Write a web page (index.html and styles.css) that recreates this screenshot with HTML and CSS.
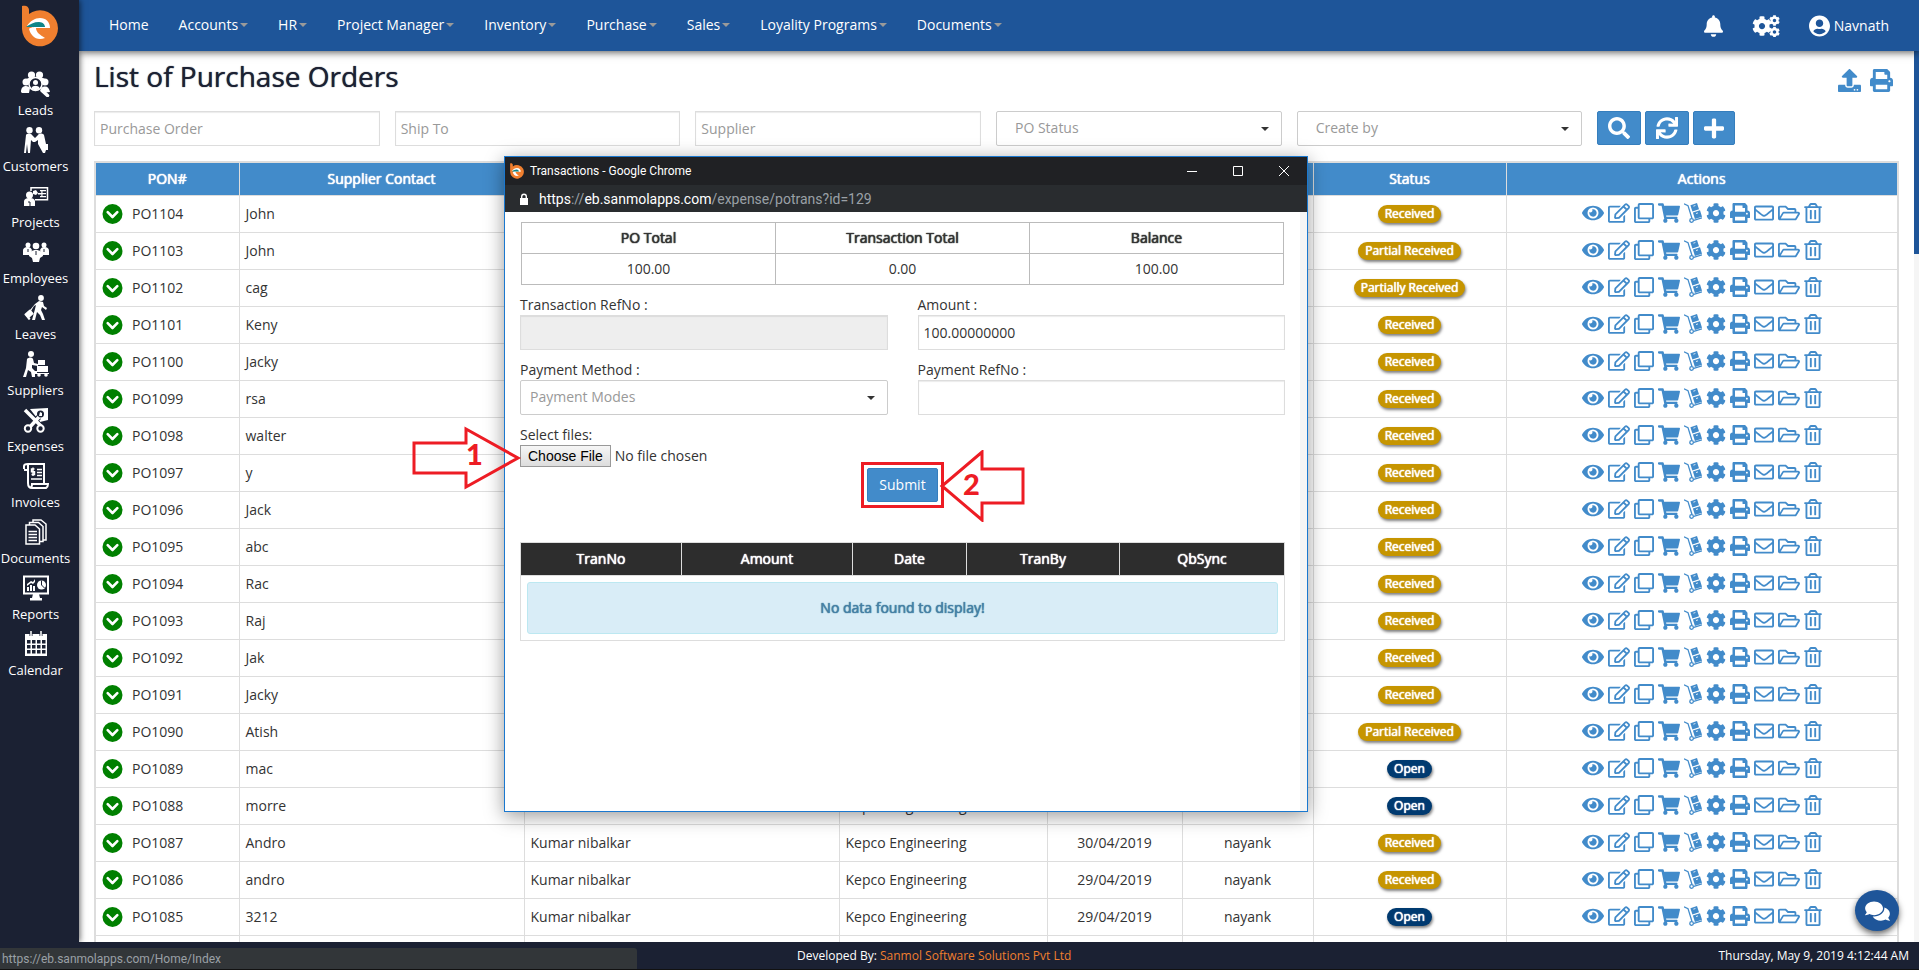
FILE: index.html
```html
<!DOCTYPE html>
<html lang="en">
<head>
<meta charset="utf-8">
<title>List of Purchase Orders</title>
<link rel="stylesheet" href="styles.css">
</head>
<body>
<svg class="sprite" aria-hidden="true">
  <symbol id="i-logo" viewBox="0 0 36 42"><path fill="#f07f2f" d="M0 1C3 0 7 1 7 5v4A18 18 0 1 1 0 24z"/><path fill="#fff" d="M5 21c3-5 8-8 13-8 6 0 10 4 10 10H14c0 4 4 7 9 10-9 3-14-2-16-9 0-1 4-2 6-2z"/><path fill="#0d8588" d="M4 22c4-3 8-5 13-5 4 0 6 3 6 5z"/></symbol>
  <symbol id="i-eye" viewBox="0 0 576 512"><path d="M572.52 241.4C518.29 135.59 410.93 64 288 64S57.68 135.64 3.48 241.41a32.35 32.35 0 0 0 0 29.19C57.71 376.41 165.07 448 288 448s230.32-71.64 284.52-177.41a32.35 32.35 0 0 0 0-29.19zM288 400a144 144 0 1 1 144-144 143.93 143.93 0 0 1-144 144zm0-240a95.31 95.31 0 0 0-25.31 3.79 47.85 47.85 0 0 1-66.9 66.9A95.78 95.78 0 1 0 288 160z"/></symbol>
  <symbol id="i-edit" viewBox="0 0 576 512"><path d="M402.3 344.9l32-32c5-5 13.7-1.5 13.7 5.7V464c0 26.5-21.5 48-48 48H48c-26.5 0-48-21.5-48-48V112c0-26.5 21.5-48 48-48h273.5c7.1 0 10.7 8.6 5.7 13.7l-32 32c-1.5 1.5-3.5 2.3-5.7 2.3H48v352h352V350.5c0-2.1.8-4.1 2.3-5.6zm156.6-201.8L296.3 405.7l-90.4 10c-26.2 2.9-48.5-19.2-45.6-45.6l10-90.4L432.9 17.1c22.9-22.9 59.9-22.9 82.7 0l43.2 43.2c22.9 22.9 22.9 60 .1 82.8zM460.1 174L402 115.9 216.2 301.8l-7.3 65.3 65.3-7.3L460.1 174zm64.8-79.7l-43.2-43.2c-4.1-4.1-10.8-4.1-14.8 0L436 82l58.1 58.1 30.9-30.9c4-4.2 4-10.8-.1-14.9z"/></symbol>
  <symbol id="i-clone" viewBox="0 0 512 512"><path d="M464 0H144c-26.51 0-48 21.49-48 48v48H48c-26.51 0-48 21.49-48 48v320c0 26.51 21.49 48 48 48h320c26.51 0 48-21.49 48-48v-48h48c26.51 0 48-21.49 48-48V48c0-26.51-21.49-48-48-48zM362 464H54a6 6 0 0 1-6-6V150a6 6 0 0 1 6-6h42v224c0 26.51 21.49 48 48 48h224v42a6 6 0 0 1-6 6zm96-96H150a6 6 0 0 1-6-6V54a6 6 0 0 1 6-6h308a6 6 0 0 1 6 6v308a6 6 0 0 1-6 6z"/></symbol>
  <symbol id="i-cart" viewBox="0 0 576 512"><path d="M528.12 301.319l47.273-208C578.806 78.301 567.391 64 551.99 64H159.208l-9.166-44.81C147.758 8.021 137.93 0 126.529 0H24C10.745 0 0 10.745 0 24v16c0 13.255 10.745 24 24 24h69.883l70.248 343.435C147.325 417.1 136 435.222 136 456c0 30.928 25.072 56 56 56s56-25.072 56-56c0-15.674-6.447-29.835-16.824-40h209.647C430.447 426.165 424 440.326 424 456c0 30.928 25.072 56 56 56s56-25.072 56-56c0-22.172-12.888-41.332-31.579-50.405l5.517-24.276c3.413-15.018-8.002-29.319-23.403-29.319H218.117l-6.545-32h293.145c11.206 0 20.92-7.754 23.403-18.681z"/></symbol>
  <symbol id="i-dolly" viewBox="0 0 18 20"><path fill="none" stroke="currentColor" stroke-width="1.300" d="M0 .8l4 1.800 4 12.900M9.800 17.300L18 14.800"/><circle cx="7.600" cy="17.500" r="1.800" fill="none" stroke="currentColor" stroke-width="1.300"/><path d="M6.400 2.200L13 0l2 6.300-6.600 2.100zM8.900 9.600l7.100-2.300 2 6.400-7.100 2.200z"/><path stroke="#fff" stroke-width=".8" d="M9.400 3.200l2-.7M12 10.600l2-.7"/></symbol>
  <symbol id="i-cog" viewBox="0 0 512 512"><path d="M487.4 315.7l-42.6-24.6c4.3-23.2 4.3-47 0-70.2l42.6-24.6c4.9-2.8 7.1-8.6 5.5-14-11.1-35.6-30-67.8-54.7-94.6-3.8-4.1-10-5.1-14.8-2.3L380.8 110c-17.9-15.4-38.5-27.3-60.8-35.1V25.8c0-5.6-3.9-10.5-9.4-11.7-36.7-8.2-74.3-7.8-109.2 0-5.5 1.200-9.400 6.100-9.400 11.700V75c-22.200 7.900-42.800 19.800-60.800 35.100L88.700 85.500c-4.900-2.800-11-1.900-14.800 2.300-24.700 26.700-43.600 58.900-54.700 94.600-1.700 5.400.6 11.200 5.500 14L67.300 221c-4.300 23.200-4.300 47 0 70.200l-42.600 24.600c-4.900 2.800-7.100 8.600-5.500 14 11.100 35.600 30 67.800 54.700 94.600 3.800 4.100 10 5.100 14.800 2.300l42.600-24.600c17.900 15.400 38.500 27.300 60.800 35.100v49.200c0 5.600 3.900 10.500 9.400 11.700 36.700 8.200 74.300 7.800 109.200 0 5.500-1.200 9.400-6.100 9.400-11.700v-49.200c22.200-7.900 42.800-19.800 60.800-35.100l42.600 24.600c4.900 2.800 11 1.900 14.800-2.300 24.700-26.700 43.600-58.900 54.700-94.600 1.500-5.500-.7-11.300-5.600-14.100zM256 336c-44.100 0-80-35.900-80-80s35.900-80 80-80 80 35.900 80 80-35.900 80-80 80z"/></symbol>
  <symbol id="i-cogs" viewBox="0 0 28 22"><use href="#i-cog" x="0" y="1" width="20" height="20"/><use href="#i-cog" x="17" y="0" width="11" height="11"/><use href="#i-cog" x="17" y="11.500" width="11" height="11"/></symbol>
  <symbol id="i-print" viewBox="0 0 512 512"><path d="M448 192V77.250c0-8.490-3.370-16.620-9.370-22.630L393.370 9.370c-6-6-14.140-9.370-22.630-9.370H96C78.330 0 64 14.330 64 32v160c-35.350 0-64 28.650-64 64v112c0 8.840 7.160 16 16 16h48v96c0 17.670 14.330 32 32 32h320c17.670 0 32-14.330 32-32v-96h48c8.840 0 16-7.160 16-16V256c0-35.350-28.650-64-64-64zm-64 256H128v-96h256v96zm0-224H128V64h192v48c0 8.840 7.160 16 16 16h48v96zm48 72c-13.250 0-24-10.750-24-24 0-13.260 10.750-24 24-24s24 10.740 24 24c0 13.250-10.750 24-24 24z"/></symbol>
  <symbol id="i-mail" viewBox="0 0 512 512"><path d="M464 64H48C21.490 64 0 85.490 0 112v288c0 26.510 21.490 48 48 48h416c26.510 0 48-21.490 48-48V112c0-26.510-21.490-48-48-48zm0 48v40.805c-22.422 18.259-58.168 46.651-134.587 106.490-16.841 13.247-50.201 45.072-73.413 44.701-23.208.375-56.579-31.459-73.413-44.701C106.180 199.465 70.425 171.067 48 152.805V112h416zM48 400V214.398c22.914 18.251 55.409 43.862 104.938 82.646 21.857 17.205 60.134 55.186 103.062 54.955 42.717.231 80.509-37.199 103.053-54.947 49.528-38.783 82.032-64.401 104.947-82.653V400H48z"/></symbol>
  <symbol id="i-folder" viewBox="0 0 576 512"><path d="M527.900 224H480v-48c0-26.500-21.500-48-48-48H272l-64-64H48C21.500 64 0 85.500 0 112v288c0 26.500 21.500 48 48 48h400c16.500 0 31.900-8.500 40.700-22.600l79.900-128c20-31.900-3-73.400-40.700-73.400zM48 118c0-3.300 2.700-6 6-6h134.100l64 64H426c3.300 0 6 2.700 6 6v42H152c-16.800 0-32.400 8.800-41.100 23.200L48 351.400zm400 282H72l77.200-128H528z"/></symbol>
  <symbol id="i-trash" viewBox="0 0 448 512"><path d="M268 416h24a12 12 0 0 0 12-12V188a12 12 0 0 0-12-12h-24a12 12 0 0 0-12 12v216a12 12 0 0 0 12 12zM432 80h-82.410l-34-56.700A48 48 0 0 0 274.410 0H173.590a48 48 0 0 0-41.160 23.300L98.410 80H16A16 16 0 0 0 0 96v16a16 16 0 0 0 16 16h16v336a48 48 0 0 0 48 48h288a48 48 0 0 0 48-48V128h16a16 16 0 0 0 16-16V96a16 16 0 0 0-16-16zM171.840 50.910A6 6 0 0 1 177 48h94a6 6 0 0 1 5.150 2.910L293.610 80H154.390zM368 464H80V128h288zm-212-48h24a12 12 0 0 0 12-12V188a12 12 0 0 0-12-12h-24a12 12 0 0 0-12 12v216a12 12 0 0 0 12 12z"/></symbol>
  <symbol id="i-bell" viewBox="0 0 448 512"><path d="M224 512c35.320 0 63.970-28.650 63.970-64H160.030c0 35.350 28.650 64 63.970 64zm215.390-149.710c-19.320-20.760-55.470-51.990-55.470-154.290 0-77.700-54.480-139.900-127.940-155.160V32c0-17.670-14.320-32-31.980-32s-31.980 14.330-31.980 32v20.840C118.560 68.100 64.080 130.300 64.080 208c0 102.300-36.150 133.530-55.470 154.290-6 6.450-8.660 14.160-8.610 21.710.11 16.400 12.980 32 32.100 32h383.800c19.120 0 32-15.600 32.100-32 .05-7.550-2.610-15.270-8.610-21.710z"/></symbol>
  <symbol id="i-user" viewBox="0 0 496 512"><path d="M248 8C111 8 0 119 0 256s111 248 248 248 248-111 248-248S385 8 248 8zm0 96c48.600 0 88 39.400 88 88s-39.400 88-88 88-88-39.400-88-88 39.400-88 88-88zm0 344c-58.700 0-111.300-26.600-146.500-68.200 18.800-35.400 55.600-59.800 98.500-59.800 2.400 0 4.800.4 7.100 1.100 13 4.200 26.600 6.900 40.900 6.900 14.300 0 28-2.700 40.900-6.900 2.300-.7 4.700-1.100 7.100-1.100 42.900 0 79.700 24.400 98.500 59.800C359.300 421.400 306.700 448 248 448z"/></symbol>
  <symbol id="i-upload" viewBox="0 0 512 512"><path d="M296 384h-80c-13.300 0-24-10.700-24-24V192h-87.700c-17.800 0-26.700-21.500-14.100-34.100L242.300 5.700c7.500-7.500 19.800-7.500 27.300 0l152.200 152.200c12.600 12.600 3.700 34.100-14.100 34.100H320v168c0 13.300-10.700 24-24 24zm216-8v112c0 13.300-10.700 24-24 24H24c-13.300 0-24-10.700-24-24V376c0-13.300 10.700-24 24-24h136v8c0 30.900 25.100 56 56 56h80c30.900 0 56-25.100 56-56v-8h136c13.300 0 24 10.700 24 24zm-124 88c0-11-9-20-20-20s-20 9-20 20 9 20 20 20 20-9 20-20zm64 0c0-11-9-20-20-20s-20 9-20 20 9 20 20 20 20-9 20-20z"/></symbol>
  <symbol id="i-search" viewBox="0 0 512 512"><path d="M505 442.700L405.300 343c-4.500-4.500-10.600-7-17-7H372c27.600-35.300 44-79.700 44-128C416 93.100 322.900 0 208 0S0 93.100 0 208s93.100 208 208 208c48.300 0 92.700-16.400 128-44v16.300c0 6.400 2.500 12.500 7 17l99.700 99.700c9.400 9.400 24.600 9.400 33.900 0l28.300-28.300c9.400-9.400 9.400-24.600.1-34zM208 336c-70.700 0-128-57.200-128-128 0-70.700 57.200-128 128-128 70.700 0 128 57.200 128 128 0 70.700-57.200 128-128 128z"/></symbol>
  <symbol id="i-sync" viewBox="0 0 512 512"><path d="M440.650 12.570l4 82.770A247.160 247.160 0 0 0 255.830 8C134.730 8 33.910 94.920 12.290 209.820A12 12 0 0 0 24.090 224h49.050a12 12 0 0 0 11.670-9.260 175.910 175.910 0 0 1 317-56.940l-101.460-4.860a12 12 0 0 0-12.570 12v47.410a12 12 0 0 0 12 12H500a12 12 0 0 0 12-12V12a12 12 0 0 0-12-12h-47.370a12 12 0 0 0-11.980 12.570zM255.830 432a175.610 175.610 0 0 1-146-77.800l101.800 4.870a12 12 0 0 0 12.570-12v-47.400a12 12 0 0 0-12-12H12a12 12 0 0 0-12 12V500a12 12 0 0 0 12 12h47.350a12 12 0 0 0 12-12.600l-4.150-82.570A247.170 247.170 0 0 0 255.830 504c121.110 0 221.930-86.920 243.550-201.820a12 12 0 0 0-11.800-14.180h-49.050a12 12 0 0 0-11.670 9.260A175.860 175.860 0 0 1 255.830 432z"/></symbol>
  <symbol id="i-plus" viewBox="0 0 448 512"><path d="M416 208H272V64c0-17.670-14.330-32-32-32h-32c-17.670 0-32 14.330-32 32v144H32c-17.670 0-32 14.330-32 32v32c0 17.670 14.330 32 32 32h144v144c0 17.670 14.330 32 32 32h32c17.670 0 32-14.330 32-32V304h144c17.670 0 32-14.330 32-32v-32c0-17.670-14.330-32-32-32z"/></symbol>
  <symbol id="i-down" viewBox="0 0 20 20"><circle cx="10" cy="10" r="10"/><path fill="none" stroke="#fff" stroke-width="2.600" stroke-linecap="round" stroke-linejoin="round" d="M5.200 8.200L10 13l4.800-4.800"/></symbol>
  <symbol id="i-chat" viewBox="0 0 576 512"><path d="M416 192c0-88.400-93.100-160-208-160S0 103.600 0 192c0 34.300 14.100 65.900 38 92-13.400 30.200-35.500 54.200-35.800 54.500-2.200 2.300-2.800 5.700-1.500 8.700S4.800 352 8 352c36.600 0 66.900-12.300 88.700-25 32.200 15.700 70.300 25 111.300 25 114.900 0 208-71.600 208-160zm122 220c23.900-26 38-57.700 38-92 0-66.900-53.500-124.200-129.300-148.100.9 6.600 1.300 13.300 1.300 20.100 0 105.900-107.700 192-240 192-10.800 0-21.300-.8-31.700-1.900C207.800 439.600 281.800 480 368 480c41 0 79.100-9.200 111.300-25 21.800 12.700 52.100 25 88.700 25 3.200 0 6.100-1.900 7.300-4.800 1.300-2.900.7-6.300-1.500-8.700-.3-.3-22.400-24.200-35.800-54.500z"/></symbol>
  <symbol id="i-lock" viewBox="0 0 10 12"><path d="M1 5h8v7H1zM2 5V3.500a3 3 0 0 1 6 0V5H6.600V3.500a1.600 1.600 0 0 0-3.200 0V5z"/></symbol>

  <symbol id="s-leads" viewBox="0 0 30 26"><circle cx="10.500" cy="4" r="3.600"/><circle cx="18.500" cy="4" r="3.600"/><circle cx="5" cy="11" r="3.500"/><circle cx="24" cy="11" r="3.500"/><path d="M0 21c0-4 2-6 5-6 2 0 3 1 4 2l-1 5H1zM20 17c5-3 8-1 9 4l-8 1zM6 8c1-2 16-2 18 0l-3 4H9z"/><circle cx="14.500" cy="13" r="6.500" fill="#1b2133" stroke="#fff" stroke-width="1.500"/><circle cx="14.500" cy="11.500" r="2.500"/><path d="M10.500 17c1-3 7-3 8 0-2 3-6 3-8 0z"/><path stroke="#fff" stroke-width="3.500" stroke-linecap="round" d="M21 19.500l5.500 5"/></symbol>
  <symbol id="s-customers" viewBox="0 0 26 26"><circle cx="6.500" cy="3.300" r="3.200"/><circle cx="16" cy="3.300" r="3.200"/><path d="M3 8c1-2 5-2 6 0l3 3 3-3c1-2 5-2 6 0l2 9h2v6h-2l-1 3h-2l-5-9v-4l-3 2h-2l-2-2-1 13H5l-1-9-1 9H1z"/></symbol>
  <symbol id="s-projects" viewBox="0 0 26 26"><path fill="none" stroke="#fff" stroke-width="1.500" d="M8 8V4.700h16.500v12H12"/><circle cx="6.500" cy="12" r="3.500"/><path d="M1 23v-4c0-3 2-4 5.500-4s5.500 1 5.500 4v4z"/><path d="M10 8l3-1 2 3-2 2-3-1zM15 10h3v1.500h-3zM17 7h6v1.300h-6zM17 10h6v1.300h-6zM17 13h6v1.300h-6z"/><path d="M18.300 7h1.200v7h-1.200z"/><path stroke="#1b2133" d="M5 19h2v4"/></symbol>
  <symbol id="s-employees" viewBox="0 0 26 26"><circle cx="5" cy="6" r="2.500"/><circle cx="21" cy="6" r="2.500"/><circle cx="13" cy="7" r="3.300"/><path d="M0 16v-4c0-3 2-4 5-4 2 0 3 1 4 3l-2 5zM26 16v-4c0-3-2-4-5-4-2 0-3 1-4 3l2 5z"/><path d="M6 17c0-4 3-6 7-6s7 2 7 6l-3 2-1 4h-6l-1-4z"/><path stroke="#1b2133" stroke-width="1" d="M13 12v4M5 10v3M21 10v3"/></symbol>
  <symbol id="s-leaves" viewBox="0 0 26 26"><circle cx="18" cy="3" r="2.900"/><path d="M12 9l4-3 4 1 1 4 3 2-1 2-4-3-1 3 2 4 2 6h-3l-2-5-3-3-2 8h-3l3-11 1-4-2 1-3 5-1-1z"/><rect x="2" y="16" width="8" height="6" rx="1" transform="rotate(-40 6 19)"/><circle cx="6" cy="23.500" r="1.300"/></symbol>
  <symbol id="s-suppliers" viewBox="0 0 26 26"><circle cx="8" cy="3" r="3"/><path d="M4 8c2-2 5-2 6 0l1 4 4 1v2l-6-1 0 3 3 3v6H9l-1-5-3-2-2 7H0l3-9z"/><path d="M15 9h7v5h-7zM14 15h11v6H14zM12 20h2v2h12v1H12z"/><circle cx="16" cy="24" r="1.800"/><circle cx="23" cy="24" r="1.800"/></symbol>
  <symbol id="s-expenses" viewBox="0 0 26 26"><path d="M7 2l18-1v12l-8 2z"/><circle cx="17.500" cy="7" r="3.500" fill="#1b2133"/><path d="M17 5l2 1v3h-3z"/><path stroke="#1b2133" stroke-width="5.500" d="M3 4l17 18M16 10L5 21"/><path stroke="#fff" stroke-width="3.500" d="M2 3l17 17M16 10L6 21"/><circle cx="5" cy="21.500" r="3.200" fill="#1b2133" stroke="#fff" stroke-width="2"/><circle cx="17.500" cy="21.500" r="3.200" fill="#1b2133" stroke="#fff" stroke-width="2"/></symbol>
  <symbol id="s-invoices" viewBox="0 0 26 26"><g fill="none" stroke="#fff" stroke-width="2"><path d="M1 6V3c0-2 2-2 4-2h16v19M5 2v18c0 3 1 5 4 5h14c2-1 2-3 2-4H9c0 3-1 4-2 4M1 7h4"/></g><path fill="none" stroke="#fff" stroke-width="1.400" d="M11.500 6H8.500v2.700h3v2.800h-3M10 4.500V13M14 6.500h5M14 9.500h5M14 12.500h5M8 16h11"/></symbol>
  <symbol id="s-documents" viewBox="0 0 26 26"><g fill="#1b2133" stroke="#fff" stroke-width="1.500"><path d="M10 1h8l5 4v16H10z"/><path d="M6.500 3.500h9l4.500 4v15H6.500z"/><path d="M3 6h9l4.500 4v15H3z"/></g><path stroke="#fff" stroke-width="1.400" d="M5.500 12.500h8.500M5.500 15.500h8.500M5.500 18.500h8.500M5.500 21.500h8.500"/></symbol>
  <symbol id="s-reports" viewBox="0 0 26 26"><path fill="none" stroke="#fff" stroke-width="2" d="M1 1.500h24v17H1z"/><path d="M10 19h6l1 4h2v2.500H7V23h2zM4 12h2v4H4zM7 10h2v6H7zM10 11h2v5h-2zM4 9l4-3 2 1 2-3 0 3-2 2-2-1-4 3z"/><circle cx="18.500" cy="10" r="4.500"/><path stroke="#1b2133" d="M18.500 5.500V10l3 3"/></symbol>
  <symbol id="s-calendar" viewBox="0 0 26 26"><path d="M2 3h22v22H2z"/><path stroke="#1b2133" stroke-width="3" d="M8 0v5M18 0v5"/><path stroke="#fff" stroke-width="1.500" d="M8 0v5M18 0v5"/><path fill="#1b2133" d="M4 9h3.500v3.500H4zM9 9h3.500v3.500H9zM14 9h3.500v3.500H14zM19 9h3.500v3.500H19zM4 14h3.500v3.500H4zM9 14h3.500v3.500H9zM14 14h3.500v3.500H14zM19 14h3.500v3.500H19zM4 19h3.500v3.500H4zM9 19h3.500v3.500H9zM14 19h3.500v3.500H14zM19 19h3.500v3.500H19z"/></symbol>
</svg>

<div class="app">
  <aside class="sidebar">
    <a class="logo" href="#" aria-label="Dashboard"><svg><use href="#i-logo"/></svg></a>
    <nav class="side-nav" aria-label="Modules">
      <a href="#"><svg><use href="#s-leads"/></svg>Leads</a>
      <a href="#"><svg><use href="#s-customers"/></svg>Customers</a>
      <a href="#"><svg><use href="#s-projects"/></svg>Projects</a>
      <a href="#"><svg><use href="#s-employees"/></svg>Employees</a>
      <a href="#"><svg><use href="#s-leaves"/></svg>Leaves</a>
      <a href="#"><svg><use href="#s-suppliers"/></svg>Suppliers</a>
      <a href="#"><svg><use href="#s-expenses"/></svg>Expenses</a>
      <a href="#"><svg><use href="#s-invoices"/></svg>Invoices</a>
      <a href="#"><svg><use href="#s-documents"/></svg>Documents</a>
      <a href="#"><svg><use href="#s-reports"/></svg>Reports</a>
      <a href="#"><svg><use href="#s-calendar"/></svg>Calendar</a>
    </nav>
  </aside>

  <header class="topbar">
    <nav class="menu" aria-label="Main">
      <a href="#">Home</a>
      <a class="drop" href="#">Accounts</a>
      <a class="drop" href="#">HR</a>
      <a class="drop" href="#">Project Manager</a>
      <a class="drop" href="#">Inventory</a>
      <a class="drop" href="#">Purchase</a>
      <a class="drop" href="#">Sales</a>
      <a class="drop" href="#">Loyality Programs</a>
      <a class="drop" href="#">Documents</a>
    </nav>
    <div class="tools">
      <a href="#" aria-label="Notifications"><svg class="bell"><use href="#i-bell"/></svg></a>
      <a href="#" aria-label="Settings"><svg class="cogs"><use href="#i-cogs"/></svg></a>
      <a class="user" href="#"><svg><use href="#i-user"/></svg>Navnath</a>
    </div>
  </header>

  <main class="content">
    <div class="page-head">
      <h1>List of Purchase Orders</h1>
      <div class="page-tools">
        <a href="#" aria-label="Export"><svg><use href="#i-upload"/></svg></a>
        <a href="#" aria-label="Print"><svg><use href="#i-print"/></svg></a>
      </div>
    </div>
    <form class="filters">
      <input class="field" type="text" placeholder="Purchase Order" aria-label="Purchase Order">
      <input class="field" type="text" placeholder="Ship To" aria-label="Ship To">
      <input class="field" type="text" placeholder="Supplier" aria-label="Supplier">
      <div class="select"><select class="field" aria-label="PO Status"><option>PO Status</option></select></div>
      <div class="select"><select class="field" aria-label="Create by"><option>Create by</option></select></div>
      <div class="filter-buttons">
        <button class="btn" type="button" aria-label="Search"><svg><use href="#i-search"/></svg></button>
        <button class="btn" type="button" aria-label="Refresh"><svg><use href="#i-sync"/></svg></button>
        <button class="btn" type="button" aria-label="Add"><svg class="plus"><use href="#i-plus"/></svg></button>
      </div>
    </form>
    <table class="orders">
      <colgroup><col class="c-pon"><col class="c-contact"><col class="c-ship"><col class="c-supplier"><col class="c-date"><col class="c-by"><col class="c-status"><col class="c-actions"></colgroup>
      <thead>
        <tr><th>PON#</th><th>Supplier Contact</th><th></th><th></th><th></th><th></th><th>Status</th><th>Actions</th></tr>
      </thead>
      <tbody id="orders"></tbody>
    </table>
    <div class="page-scroll"><div class="page-thumb"></div></div>
    <button class="chat" type="button" aria-label="Chat"><svg><use href="#i-chat"/></svg></button>
  </main>

  <footer class="footer">
    <p class="credit">Developed By: <a href="#">Sanmol Software Solutions Pvt Ltd</a></p>
    <time>Thursday, May 9, 2019 4:12:44 AM</time>
  </footer>
</div>
<div class="link-status">https://eb.sanmolapps.com/Home/Index</div>

<section class="window" aria-label="Transactions">
  <div class="titlebar">
    <svg class="favicon"><use href="#i-logo"/></svg>
    <span class="caption">Transactions - Google Chrome</span>
    <button type="button" aria-label="Minimize"><svg viewBox="0 0 10 10"><path d="M0 5.500h10"/></svg></button>
    <button type="button" aria-label="Maximize"><svg viewBox="0 0 10 10"><path d="M.5.500h9v9h-9z"/></svg></button>
    <button type="button" aria-label="Close"><svg viewBox="0 0 10 10"><path d="M0 0l10 10M10 0L0 10"/></svg></button>
  </div>
  <div class="address"><svg><use href="#i-lock"/></svg><span>https<i>://</i>eb.sanmolapps.com<i>/expense/potrans?id=129</i></span></div>
  <div class="window-body">
    <table class="totals">
      <thead><tr><th>PO Total</th><th>Transaction Total</th><th>Balance</th></tr></thead>
      <tbody><tr><td>100.00</td><td>0.00</td><td>100.00</td></tr></tbody>
    </table>
    <form class="payment">
      <div class="group"><label for="refno">Transaction RefNo :</label><input class="field" id="refno" type="text" disabled></div>
      <div class="group"><label for="amount">Amount :</label><input class="field" id="amount" type="text" value="100.00000000"></div>
      <div class="group"><label for="method">Payment Method :</label><div class="select"><select class="field" id="method"><option>Payment Modes</option></select></div></div>
      <div class="group"><label for="payref">Payment RefNo :</label><input class="field" id="payref" type="text"></div>
      <div class="group files"><label for="files">Select files:</label><input id="files" type="file"></div>
      <div class="submit-row"><div class="highlight"><button class="btn submit" type="button">Submit</button></div></div>
    </form>
    <table class="trans">
      <colgroup><col class="t-no"><col class="t-amount"><col class="t-date"><col class="t-by"><col class="t-sync"></colgroup>
      <thead><tr><th>TranNo</th><th>Amount</th><th>Date</th><th>TranBy</th><th>QbSync</th></tr></thead>
      <tbody><tr><td colspan="5"><div class="alert">No data found to display!</div></td></tr></tbody>
    </table>
  </div>
  <div class="mark mark-one"><svg viewBox="0 0 110 64"><path d="M2 17h52V3l52 29-52 29V47H2z"/></svg><b>1</b></div>
  <div class="mark mark-two"><svg viewBox="0 0 86 72"><path d="M84 19H43V2L3 36l40 34V53h41z"/></svg><b>2</b></div>
</section>
<script src="app.js"></script>
</body>
</html>
```
FILE: styles.css
```css
* { box-sizing: border-box; }
body {
  margin: 0;
  font: 14px/20px "Open Sans", "Noto Sans", sans-serif;
  color: #333;
  background: #fff;
}
a { color: inherit; text-decoration: none; }
svg { display: block; fill: currentColor; }
button, input, select { font: inherit; color: inherit; }
button { cursor: pointer; }
.sprite { position: absolute; width: 0; height: 0; }

.app {
  display: grid;
  grid-template-columns: 79px minmax(0, 1fr);
  grid-template-rows: 51px minmax(0, 1fr) 28px;
  height: 100vh;
}

/* Sidebar */
.sidebar {
  grid-row: 1 / 3;
  z-index: 4;
  background: #1b2133;
  color: #fff;
  box-shadow: 1px 0 6px rgba(0, 0, 0, .6);
}
.logo { display: flex; justify-content: center; padding-top: 5px; height: 65px; }
.logo svg { width: 36px; height: 42px; }
.side-nav { display: flex; flex-direction: column; padding-right: 8px; }
.side-nav a {
  display: flex;
  flex-direction: column;
  align-items: center;
  gap: 3px;
  height: 56px;
  padding-top: 6px;
  font-size: 13px;
}
.side-nav svg { width: 30px; height: 26px; }

/* Top bar */
.topbar {
  display: flex;
  justify-content: space-between;
  align-items: center;
  padding: 0 30px 0 15px;
  background: #1e5599;
  color: #fff;
  z-index: 3;
  box-shadow: 0 1px 8px rgba(0, 0, 0, .7);
}
.menu { display: flex; padding-bottom: 2px; }
.menu a { display: flex; align-items: center; gap: 2px; padding: 0 15px; }
.drop::after {
  content: "";
  border: 4px solid transparent;
  border-top-color: #9a9a9a;
  border-bottom: 0;
}
.tools { display: flex; align-items: center; }
.bell { width: 19px; height: 22px; margin-right: 29px; }
.cogs { width: 28px; height: 22px; margin-right: 29px; }
.user { display: flex; align-items: center; gap: 4px; }
.user svg { width: 21px; height: 22px; }

/* Page */
.content { position: relative; padding: 0 21px 0 15px; overflow: hidden; }
.page-head {
  display: flex;
  justify-content: space-between;
  align-items: center;
  height: 60px;
  padding: 0 5px 10px 0;
}
h1 { margin: 0; font-size: 28px; line-height: 36px; font-weight: 400; color: #1b2133; text-shadow: 0 0 1px currentColor; }
.page-tools { display: flex; gap: 9px; padding-top: 8px; color: #428bca; }
.page-tools svg { width: 23px; height: 23px; }
.filters {
  display: grid;
  grid-template-columns: repeat(6, minmax(0, 1fr));
  gap: 15px;
  padding-right: 15px;
}
.field {
  display: block;
  width: 100%;
  height: 35px;
  padding: 0 5px;
  border: 1px solid #ddd;
  border-radius: 0;
  background: #fff;
  box-shadow: inset 0 1px 1px rgba(0, 0, 0, .08);
  outline: 0;
}
.field::placeholder { color: #999; opacity: 1; }
.field:disabled { background: #eee; }
.select { position: relative; }
.select::after {
  content: "";
  position: absolute;
  right: 13px;
  top: 16px;
  border: 4px solid transparent;
  border-top-color: #333;
  border-bottom: 0;
}
select.field {
  appearance: none;
  padding: 0 30px 1px 18px;
  border-color: #ccc;
  border-radius: 2px;
  color: #999;
  box-shadow: none;
}
.filter-buttons { display: flex; gap: 4px; }
.btn {
  display: flex;
  align-items: center;
  justify-content: center;
  height: 34px;
  padding: 0 10px;
  border: 1px solid #357ebd;
  border-radius: 2px;
  background: #428bca;
  color: #fff;
}
.btn svg { width: 22px; height: 22px; }
.btn .plus { width: 20px; height: 23px; }

.orders {
  width: 100%;
  margin-top: 15px;
  table-layout: fixed;
  border-collapse: collapse;
  border: 2px solid #ddd;
}
.c-pon { width: 144px; }
.c-contact { width: 285px; }
.c-ship { width: 315px; }
.c-supplier { width: 208px; }
.c-date { width: 135px; }
.c-by { width: 131px; }
.c-status { width: 193px; }
.c-actions { width: 392px; }
.orders th, .orders td { border: 1px solid #ddd; padding: 0 6px; }
.orders th { height: 33px; background: #428bca; color: #fff; }
.orders th, .totals th, .trans th, .alert, .badge {
  font-weight: 400;
  text-shadow: 0 0 1px currentColor, 0 0 1px currentColor;
}
.orders td { height: 37px; }
.orders .center { text-align: center; }
.pon { display: flex; align-items: center; gap: 9px; }
.pon svg { width: 21px; height: 20px; color: #008000; }
.orders .state { padding-bottom: 2px; text-align: center; }
.badge {
  display: inline-block;
  padding: 0 7px;
  border-radius: 9px;
  background: #c69500;
  color: #fff;
  font-size: 12px;
  line-height: 18px;
  box-shadow: 1px 2px 3px rgba(0, 0, 0, .5);
}
.badge.open { background: #003a70; }
.actions { display: flex; justify-content: center; align-items: center; gap: 4px; padding-bottom: 1px; color: #428bca; }
.actions svg { width: 20px; height: 20px; }
.actions .wide { width: 22px; }
.actions .narrow { width: 18px; }

.page-scroll { position: absolute; top: 0; right: 0; bottom: 0; width: 5px; background: #f5f5f5; }
.page-thumb { height: 203px; background: #1e5599; }
.chat {
  position: absolute;
  right: 20px;
  bottom: 11px;
  display: flex;
  align-items: center;
  justify-content: center;
  width: 44px;
  height: 41px;
  padding: 0;
  border: 0;
  border-radius: 50%;
  background: #1e5599;
  color: #fff;
  box-shadow: 0 3px 6px rgba(0, 0, 0, .6);
}
.chat svg { width: 25px; height: 22px; }

.footer {
  grid-column: 1 / 3;
  display: grid;
  grid-template-columns: 797px 1fr auto;
  align-items: center;
  padding: 0 10px 0 0;
  background: #1b2133;
  color: #fff;
  font-size: 12px;
  border-bottom: 1px solid #111;
  z-index: 5;
}
.credit { grid-column: 2; margin: 0; }
.credit a { color: #f07f2f; }
.link-status {
  position: fixed;
  left: 0;
  bottom: 1px;
  z-index: 6;
  width: 637px;
  height: 21px;
  padding: 0 2px;
  border-radius: 0 3px 0 0;
  background: #323639;
  color: #9aa0a6;
  font: 12px/22px Roboto, sans-serif;
}

/* Pop-up window */
.window {
  position: absolute;
  left: 504px;
  top: 156px;
  z-index: 10;
  width: 804px;
  height: 656px;
  display: flex;
  flex-direction: column;
  border: 1px solid #1a78cf;
  background: #fff;
  box-shadow: 0 4px 18px rgba(0, 0, 0, .4);
}
.titlebar { display: flex; align-items: center; height: 28px; padding-left: 5px; background: #202124; color: #fff; font: 12px/20px Roboto, sans-serif; }
.favicon { width: 14px; height: 16px; }
.caption { flex: 1; padding-left: 6px; }
.titlebar button { width: 46px; height: 28px; padding: 0 18px; border: 0; background: none; color: #fff; }
.titlebar button svg { width: 10px; height: 10px; fill: none; stroke: #fff; }
.address { display: flex; align-items: center; gap: 10px; height: 27px; padding-left: 14px; background: #292c2f; color: #fff; font: 14px/20px Roboto, sans-serif; }
.address svg { width: 10px; height: 12px; }
.address i { font-style: normal; color: #9aa0a6; }
.window-body { flex: 1; padding: 10px 15px 0 15px; border-right: 7px solid #f5f5f5; }
.totals, .trans { width: 100%; table-layout: fixed; border-collapse: collapse; text-align: center; }
.totals { width: calc(100% - 2px); margin-left: 1px; }
.totals th, .totals td { height: 31px; padding: 0; border: 1px solid #bbb; }
.payment { display: grid; grid-template-columns: 1fr 1fr; column-gap: 30px; row-gap: 10px; padding-top: 10px; }
.group { display: grid; }
.payment select.field { padding-left: 9px; }
.files input { font-size: 14px; height: 22px; line-height: 20px; }
.files input::file-selector-button {
  height: 22px;
  margin: 0 4px 0 0;
  padding: 0 7px;
  border: 1px solid #999;
  border-radius: 0;
  background: linear-gradient(#f6f6f6, #ddd);
  color: #000;
  font: 14px/18px "Liberation Sans", Arial, sans-serif;
}
.submit-row { grid-column: 1 / 3; display: flex; justify-content: center; margin-top: -15px; }
.highlight { padding: 3px; border: 3px solid #ed1c24; }
.submit { padding: 0 11px; }
.trans { margin-top: 34px; }
.trans th, .trans td { border: 1px solid #ddd; padding: 6px; }
.trans th { height: 33px; padding: 0; background: #2d2d2d; color: #fff; }
.t-no { width: 161px; }
.t-amount { width: 171px; }
.t-date { width: 114px; }
.t-by { width: 153px; }
.t-sync { width: 165px; }
.alert { padding: 15px; border: 1px solid #bce8f1; border-radius: 3px; background: #d9edf7; color: #4580a4; }

/* Step markers */
.mark { position: absolute; color: #ed1c24; }
.mark svg { fill: none; stroke: currentColor; stroke-width: 3; }
.mark b { position: absolute; font: 900 29px/28px Lato, sans-serif; }
.mark-one { left: -93px; top: 269px; width: 110px; height: 64px; }
.mark-one b { left: 54px; top: 14px; }
.mark-two { left: 434px; top: 293px; width: 86px; height: 72px; }
.mark-two b { left: 24px; top: 20px; }
```
FILE: app.js
```js
const ship = "Kumar nibalkar";
const supplier = "Kepco Engineering";
const orders = [
  ["PO1104", "John", "Received"],
  ["PO1103", "John", "Partial Received"],
  ["PO1102", "cag", "Partially Received"],
  ["PO1101", "Keny", "Received"],
  ["PO1100", "Jacky", "Received"],
  ["PO1099", "rsa", "Received"],
  ["PO1098", "walter", "Received"],
  ["PO1097", "y", "Received"],
  ["PO1096", "Jack", "Received"],
  ["PO1095", "abc", "Received"],
  ["PO1094", "Rac", "Received"],
  ["PO1093", "Raj", "Received"],
  ["PO1092", "Jak", "Received"],
  ["PO1091", "Jacky", "Received"],
  ["PO1090", "Atish", "Partial Received"],
  ["PO1089", "mac", "Open"],
  ["PO1088", "morre", "Open", "", supplier],
  ["PO1087", "Andro", "Received", ship, supplier, "30/04/2019", "nayank"],
  ["PO1086", "andro", "Received", ship, supplier, "29/04/2019", "nayank"],
  ["PO1085", "3212", "Open", ship, supplier, "29/04/2019", "nayank"]
];
const actions = [
  ["eye", "View", "wide"], ["edit", "Edit", "wide"], ["clone", "Copy", ""],
  ["cart", "Order", "wide"], ["dolly", "Receive", "narrow"], ["cog", "Settings", ""],
  ["print", "Print", ""], ["mail", "Send", ""], ["folder", "Files", "wide"], ["trash", "Delete", "narrow"]
];
const actionLinks = actions.map(([icon, label, size]) =>
  `<a href="#" aria-label="${label}"><svg class="${size}"><use href="#i-${icon}"/></svg></a>`).join("");

document.getElementById("orders").innerHTML = orders.map(
  ([pon, contact, status, shipTo = "", from = "", date = "", by = ""]) => `<tr>
    <td><a class="pon" href="#"><svg><use href="#i-down"/></svg>${pon}</a></td>
    <td>${contact}</td><td>${shipTo}</td><td>${from}</td>
    <td class="center">${date}</td><td class="center">${by}</td>
    <td class="state"><span class="badge ${status === "Open" ? "open" : ""}">${status}</span></td>
    <td><div class="actions">${actionLinks}</div></td>
  </tr>`).join("") + `<tr>${"<td></td>".repeat(8)}</tr>`;
```
